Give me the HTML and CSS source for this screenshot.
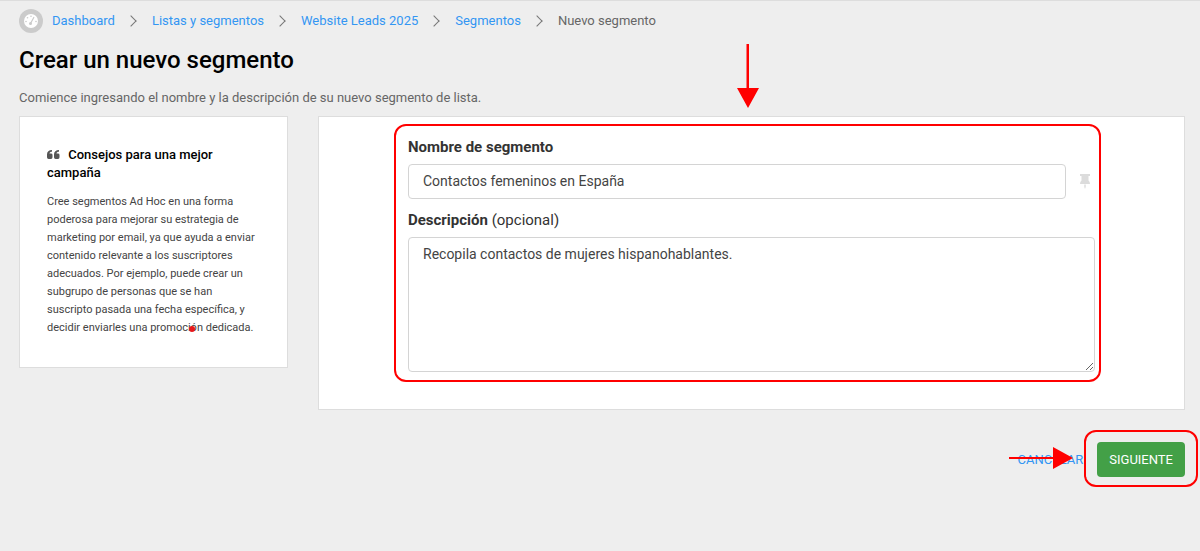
FILE: index.html
```html
<!DOCTYPE html>
<html lang="es">

<head>
    <meta charset="UTF-8">
    <meta name="viewport" content="width=device-width, initial-scale=1.0">
    <title>Nuevo segmento</title>
    <link rel="stylesheet" href="styles.css">
</head>

<body>
    <header class="page-header">
        <nav class="breadcrumb" aria-label="Ruta">
            <svg class="gauge" viewBox="0 0 24 24" aria-hidden="true">
                <circle cx="12" cy="12" r="12" fill="#cbcbcb"/>
                <circle cx="12" cy="12" r="7" fill="#fff"/>
                <g fill="#cbcbcb">
                    <circle cx="7" cy="12.500" r="0.800"/>
                    <circle cx="8.500" cy="8.800" r="0.800"/>
                    <circle cx="12" cy="7.200" r="0.800"/>
                    <circle cx="17" cy="12.500" r="0.800"/>
                    <circle cx="11.500" cy="14.500" r="1.500"/>
                </g>
                <path d="M11.500 14.500 14.800 8.500" stroke="#cbcbcb" stroke-width="1.200" stroke-linecap="round"/>
            </svg>
            <ol>
                <li><a href="#">Dashboard</a></li>
                <li><a href="#">Listas y segmentos</a></li>
                <li><a href="#">Website Leads 2025</a></li>
                <li><a href="#">Segmentos</a></li>
                <li>Nuevo segmento</li>
            </ol>
        </nav>
        <h1>Crear un nuevo segmento</h1>
        <p>Comience ingresando el nombre y la descripción de su nuevo segmento de lista.</p>
    </header>

    <form>
        <div class="columns">
            <aside class="card tips">
                <h2>
                    <svg class="quote" viewBox="0 0 13 9" aria-hidden="true">
                        <path d="M5 0v1.800C3.500 1.800 2.600 2.400 2.500 3.600H4Q5.500 3.600 5.500 5V7.300Q5.500 9 4 9H1.600Q0 9 0 7.300V4.500C0 1.600 1.900 0 5 0Z"/>
                        <path d="M12 0v1.800C10.500 1.800 9.600 2.400 9.500 3.600H11Q12.500 3.600 12.500 5V7.300Q12.500 9 11 9H8.600Q7 9 7 7.300V4.500C7 1.600 8.900 0 12 0Z"/>
                    </svg>
                    Consejos para una mejor campaña
                </h2>
                <p>Cree segmentos Ad Hoc en una forma poderosa para mejorar su estrategia de marketing por email, ya que ayuda a enviar contenido relevante a los suscriptores adecuados. Por ejemplo, puede crear un subgrupo de personas que se han suscripto pasada una fecha específica, y decidir enviarles una promoción dedicada.</p>
            </aside>

            <section class="card fields">
                <div class="field-group marked">
                    <svg class="arrow-down" viewBox="0 0 24 64" aria-hidden="true">
                        <path d="M10.500 0h2.500v44h10L12 64 1 44h9.500Z" fill="#f00"/>
                    </svg>
                    <label for="name">Nombre de segmento</label>
                    <div class="name-row">
                        <input type="text" id="name" value="Contactos femeninos en España">
                        <svg class="pin" viewBox="0 0 10 15" aria-hidden="true">
                            <path d="M0 0h10v2H8.500v4.500Q10 7.500 10 10H0Q0 7.500 1.500 6.500V2H0ZM4.300 10.500h1.400V13L5 15l-.7-2Z"/>
                        </svg>
                    </div>
                    <label for="description">Descripción <span>(opcional)</span></label>
                    <textarea id="description">Recopila contactos de mujeres hispanohablantes.</textarea>
                </div>
            </section>
        </div>

        <div class="actions">
            <a href="#" class="cancel">CANCELAR
                <svg class="arrow-right" viewBox="0 0 64 24" aria-hidden="true">
                    <path d="M0 10h44V0l20 11-20 11V12H0Z" fill="#f00"/>
                </svg>
            </a>
            <div class="marked">
                <button type="submit">SIGUIENTE</button>
            </div>
        </div>
    </form>
</body>

</html>
```
FILE: styles.css
```css
* {
    box-sizing: border-box;
}

body {
    margin: 0;
    padding: 8px 15px 24px 19px;
    background-color: #eee;
    color: #666;
    font-family: Roboto, sans-serif;
    font-size: 13px;
    line-height: 24px;
    border-top: 1px solid #ddd;
}

h1, h2, p, ol {
    margin: 0;
    padding: 0;
}

a {
    color: #3396f3;
    text-decoration: none;
}

.breadcrumb {
    display: flex;
    align-items: center;
    gap: 9px;
}

.gauge {
    width: 24px;
    height: 24px;
}

.breadcrumb ol {
    display: flex;
    list-style: none;
}

.breadcrumb li {
    display: flex;
    align-items: center;
}

.breadcrumb li + li::before {
    content: "";
    width: 7px;
    height: 7px;
    margin: 0 17px 0 12px;
    border: solid #777;
    border-width: 1px 1px 0 0;
    transform: rotate(45deg);
}

h1 {
    margin: 11px 0 13px;
    color: #000;
    font-size: 24px;
    font-weight: 500;
    line-height: 32px;
}

.page-header p {
    line-height: 18px;
    margin-bottom: 9px;
}

.columns {
    display: grid;
    grid-template-columns: 269px 1fr;
    gap: 30px;
    align-items: start;
}

.card {
    background-color: #fff;
    border: 1px solid #ddd;
}

.tips {
    padding: 29px 27px 30px;
}

.tips h2 {
    margin-bottom: 11px;
    color: #000;
    font-size: 13px;
    font-weight: 500;
    line-height: 18px;
}

.quote {
    width: 13px;
    height: 9px;
    margin-right: 5px;
    fill: #555;
}

.tips p {
    position: relative;
    color: #444;
    font-size: 11px;
    line-height: 18px;
}

.tips p::after {
    content: "";
    position: absolute;
    left: 142px;
    bottom: 5px;
    width: 6px;
    height: 6px;
    border-radius: 50%;
    background-color: #e8191c;
}

.fields {
    padding: 20px 89px 37px;
}

.field-group {
    display: flex;
    flex-direction: column;
}

.field-group label {
    color: #333;
    font-size: 15px;
    font-weight: 700;
    line-height: 20px;
    margin-bottom: 7px;
}

.field-group label span {
    font-weight: 400;
}

.name-row {
    display: flex;
    align-items: center;
    gap: 14px;
    margin-bottom: 11px;
}

input, textarea {
    border: 1px solid #d4d4d4;
    border-radius: 4px;
    background-color: #fff;
    color: #444;
    font-family: inherit;
    font-size: 14px;
    line-height: 20px;
    outline: none;
}

input {
    flex: 1;
    min-width: 0;
    height: 35px;
    padding: 0 14px 2px;
}

textarea {
    display: block;
    height: 135px;
    padding: 6px 14px;
    resize: vertical;
}

.pin {
    width: 10px;
    height: 15px;
    margin-right: 5px;
    fill: #dcdcdc;
}

/* red frames and arrows over the form */
.marked {
    position: relative;
}

.marked::after {
    content: "";
    position: absolute;
    inset: -12px -13px -10px;
    border: 2px solid #f00;
    border-radius: 12px;
    pointer-events: none;
}

.field-group.marked::after {
    inset: -13px -6px -10px -14px;
}

.arrow-down {
    position: absolute;
    left: calc(50% - 16px);
    top: -93px;
    width: 24px;
    height: 64px;
}

.actions {
    display: flex;
    justify-content: flex-end;
    align-items: center;
    gap: 14px;
    margin-top: 32px;
}

.cancel {
    position: relative;
}

.arrow-right {
    position: absolute;
    left: -9px;
    top: -1px;
    width: 64px;
    height: 24px;
}

button {
    display: block;
    height: 35px;
    padding: 0 12px;
    border: none;
    border-radius: 4px;
    background-color: #43a047;
    color: #fff;
    font-family: inherit;
    font-size: 13px;
    font-weight: 400;
    cursor: pointer;
}
```
